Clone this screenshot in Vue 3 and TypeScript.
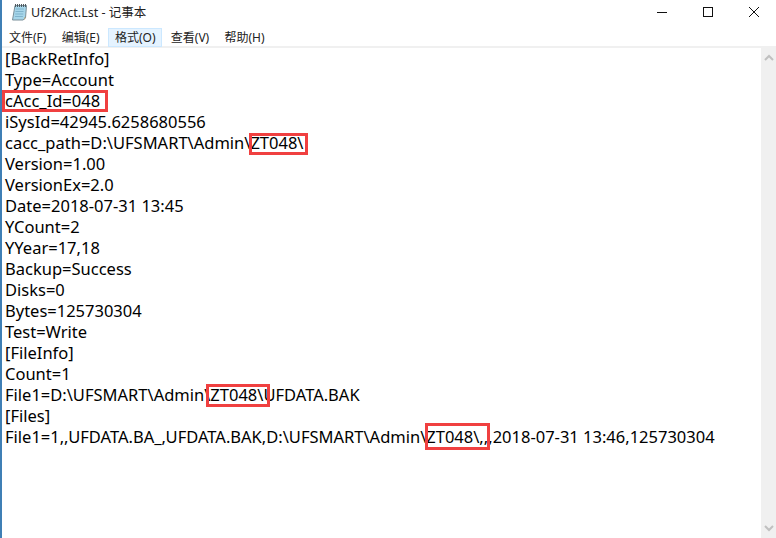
<script setup lang="ts">
const menus = [
  { label: '文件(F)', active: false },
  { label: '编辑(E)', active: false },
  { label: '格式(O)', active: true },
  { label: '查看(V)', active: false },
  { label: '帮助(H)', active: false },
]
const lines = [
  '[BackRetInfo]', 'Type=Account', 'cAcc_Id=048', 'iSysId=42945.6258680556',
  'cacc_path=D:\\UFSMART\\Admin\\ZT048\\', 'Version=1.00', 'VersionEx=2.0',
  'Date=2018-07-31 13:45', 'YCount=2', 'YYear=17,18', 'Backup=Success', 'Disks=0',
  'Bytes=125730304', 'Test=Write', '[FileInfo]', 'Count=1',
  'File1=D:\\UFSMART\\Admin\\ZT048\\UFDATA.BAK', '[Files]',
  'File1=1,,UFDATA.BA_,UFDATA.BAK,D:\\UFSMART\\Admin\\ZT048\\,,,2018-07-31 13:46,125730304',
]
const marks = [
  { left: 2, top: 90, width: 106, height: 22 },
  { left: 249, top: 133, width: 59, height: 22 },
  { left: 206, top: 384, width: 64, height: 23 },
  { left: 425, top: 423, width: 65, height: 27 },
]
function markStyle(m: { left: number; top: number; width: number; height: number }) {
  return { left: `${m.left}px`, top: `${m.top}px`, width: `${m.width}px`, height: `${m.height}px` }
}
</script>

<template>
  <div class="win">
    <header class="titlebar">
      <svg class="appicon" width="18" height="18" viewBox="0 0 18 18">
        <path d="M5 2.500h11.500l-1 12.500-2.500 2H2.500z" fill="#a6d6ea" stroke="#7a8f99" />
        <path d="M14 17l.5-3 1.500.5z" fill="#b5a47c" />
        <path d="M5.800 6h8M5.500 8.500h8M5.200 11h8M4.900 13.500h8" stroke="#7fb3cc" />
        <path d="M5.500 1v3M7.500 1v3M9.500 1v3M11.500 1v3M13.500 1v3M15.500 1v3" stroke="#4f5a60" />
      </svg>
      <span class="title">Uf2KAct.Lst - 记事本</span>
      <div class="controls">
        <svg width="12" height="12" viewBox="0 0 12 12"><path d="M1 6.500h10" stroke="#111" /></svg>
        <svg width="12" height="12" viewBox="0 0 12 12"><rect x="1.500" y="1.500" width="9" height="9" fill="none" stroke="#111" /></svg>
        <svg width="12" height="12" viewBox="0 0 12 12"><path d="M1 1l10 10M11 1L1 11" stroke="#111" /></svg>
      </div>
    </header>
    <nav class="menubar">
      <span v-for="m in menus" :key="m.label" class="menu" :class="{ active: m.active }">{{ m.label }}</span>
    </nav>
    <div class="body">
      <main class="text">
        <div v-for="(l, i) in lines" :key="i" class="line">{{ l }}</div>
      </main>
      <aside class="scroll">
        <svg width="10" height="8" viewBox="0 0 10 8"><path d="M1 6l4-4 4 4" fill="none" stroke="#c0c0c0" stroke-width="2" /></svg>
        <svg width="10" height="8" viewBox="0 0 10 8"><path d="M1 2l4 4 4-4" fill="none" stroke="#c0c0c0" stroke-width="2" /></svg>
      </aside>
    </div>
    <div v-for="(m, i) in marks" :key="i" class="mark" :style="markStyle(m)"></div>
  </div>
</template>

<style scoped>
.win {
  position: relative;
  width: 776px;
  height: 538px;
  background: #fff;
  display: flex;
  flex-direction: column;
  overflow: hidden;
  font-family: "Noto Sans", "Noto Sans CJK SC", sans-serif;
  color: #111;
  box-sizing: border-box;
  border-left: 2px solid #3f7fb5;
}
.titlebar {
  height: 28px;
  display: flex;
  align-items: center;
  padding: 0 0 5px 8px;
  box-sizing: border-box;
  flex: none;
}
.appicon { margin-right: 3px; }
.title { font-size: 12.500px; color: #222; }
.controls {
  margin-left: auto;
  display: flex;
  gap: 34px;
  padding-right: 16px;
}
.menubar {
  height: 18px;
  display: flex;
  align-items: center;
  flex: none;
  border-bottom: 2px solid #f0f0f0;
  box-sizing: content-box;
}
.menu {
  font-size: 12px;
  padding: 0 6px;
  margin-right: 1.300px;
  border: 1px solid transparent;
  height: 19px;
  box-sizing: border-box;
  display: flex;
  align-items: center;
  color: #222;
}
.menu.active { background: #e5f3ff; border-color: #cce8ff; }
.body { flex: 1; display: flex; min-height: 0; }
.text { flex: 1; padding: 0 0 0 3px; }
.line {
  font-size: 16.500px;
  line-height: 21px;
  white-space: pre;
  color: #000;
}
.scroll {
  width: 15px;
  background: #f0f0f0;
  display: flex;
  flex-direction: column;
  justify-content: space-between;
  align-items: center;
  padding: 6px 0;
}
.mark {
  position: absolute;
  box-sizing: border-box;
  border: 3px solid #f04040;
  margin-left: -2px;
}
</style>
